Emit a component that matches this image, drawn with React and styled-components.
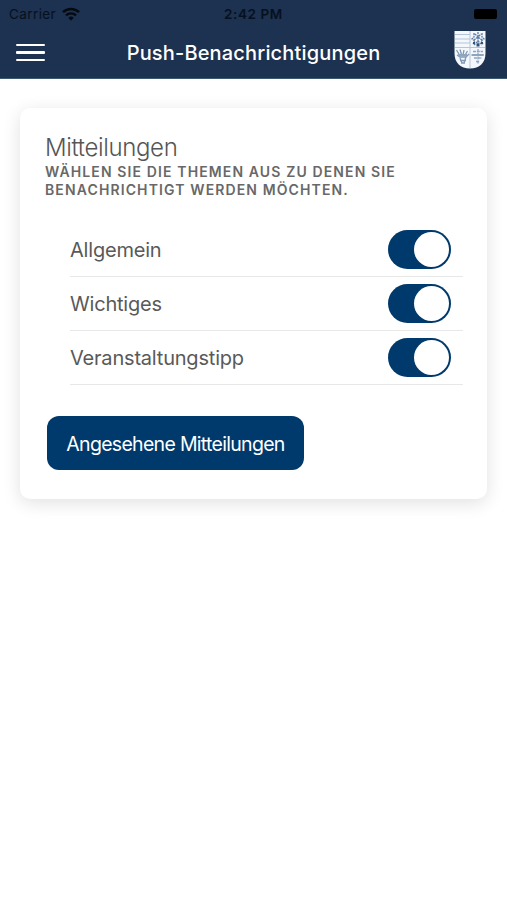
import React, {useState} from "react";
import styled, {createGlobalStyle} from "styled-components";

const topics = ["Allgemein", "Wichtiges", "Veranstaltungstipp"];

const WifiIcon = () => (
	<svg width="18" height="14" viewBox="0 0 18 14" fill="none" stroke="#050a12">
		<path d="M1 5.2a11.4 11.4 0 0 1 16 0" strokeWidth="2.5"/>
		<path d="M4 8.4a7.1 7.1 0 0 1 10 0" strokeWidth="2.3"/>
		<path d="M9 13.6 6.3 10.9a3.9 3.9 0 0 1 5.4 0Z" fill="#050a12" stroke="none"/>
	</svg>
);

const Crest = () => (
	<svg width="32" height="40" viewBox="0 0 32 40">
		<path d="M.5 1h31v22c0 10-6 15.500-15.500 15.500S.5 33 .5 23Z" fill="#f4f8fc"/>
		<g stroke="#b3c5d8" strokeWidth="1" fill="none">
			<path d="M1 4.500h15M1 9h15M1 13h15M1 17.500h30M16 1v37"/>
		</g>
		<g stroke="#5b7ba3" strokeWidth="1.300" fill="none">
			<path d="M24 2v14M20 3v4l-2 2 3 2-2 3M28 3v4l2 2-3 2 2 3M21 4l3 3 3-3M20 10l4-3 4 3M20 15l4-4 4 4" strokeDasharray="2 .7"/>
			<path d="M2.500 20l3 5M6 19.500l1.500 5M10 20l-1 5M13.500 21l-3 5M3 25l3 2h6l3-3M6 28l2 5M12 27l-2 6M6 30.500h6M7 33h4" stroke="#8299b5"/>
			<path d="M24 19v15M19 21.500h10M18 25h12M20 28h8M22 31.500h4" stroke="#8da5bf" strokeDasharray="3 .8"/>
		</g>
		<path d="M22.500 13.500h3v3h-3ZM19 12h2v2h-2ZM27 12h2v2h-2Z" fill="#2d5181"/>
		<path d="M4 24h9v2.500H4ZM17.500 24h12v2h-12Z" fill="#8ea5c0"/>
	</svg>
);

const Toggle = ({label}) => {
	const [on, setOn] = useState(true);
	return (
		<Switch role="switch" aria-label={label} aria-checked={on} $on={on} onClick={() => setOn(!on)}>
			<Knob/>
		</Switch>
	);
};

const App = () => {
	return (
		<Page>
			<GlobalStyle/>
			<Header>
				<StatusBar>
					<Carrier>
						<span>Carrier</span>
						<WifiIcon/>
					</Carrier>
					<Time>2:42 PM</Time>
					<Battery/>
				</StatusBar>
				<Toolbar>
					<MenuButton aria-label="Menü">
						<span/>
						<span/>
						<span/>
					</MenuButton>
					<Title>Push-Benachrichtigungen</Title>
					<Logo>
						<Crest/>
					</Logo>
				</Toolbar>
			</Header>
			<Card>
				<CardTitle>Mitteilungen</CardTitle>
				<CardSubtitle>
					Wählen Sie die Themen aus zu denen Sie benachrichtigt werden möchten.
				</CardSubtitle>
				<List>
					{topics.map((topic) => (
						<Item key={topic}>
							<Label>{topic}</Label>
							<Toggle label={topic}/>
						</Item>
					))}
				</List>
				<Button>Angesehene Mitteilungen</Button>
			</Card>
		</Page>
	);
};

export default App;

const GlobalStyle = createGlobalStyle`
  * {
    box-sizing: border-box;
  }

  body {
    margin: 0;
    background: #ffffff;
    font-family: Inter, "Liberation Sans", sans-serif;
  }

  button {
    border: none;
    padding: 0;
    font-family: inherit;
    cursor: pointer;
  }
`;

const Page = styled.div`
  min-height: 900px;
  overflow: hidden;
`;

const Header = styled.header`
  height: 79px;
  background: #1d3150;
  border-bottom: 1px solid #3c5870;
`;

const StatusBar = styled.div`
  display: grid;
  grid-template-columns: 1fr auto 1fr;
  align-items: center;
  height: 27px;
  padding: 0 10px 0 9px;
  color: #07101e;
  font-size: 13.5px;
`;

const Carrier = styled.div`
  display: flex;
  align-items: center;
  gap: 6px;
  letter-spacing: 0.4px;
`;

const Time = styled.div`
  padding-left: 1px;
  font-weight: 600;
  letter-spacing: 0.6px;
`;

const Battery = styled.div`
  justify-self: end;
  width: 23px;
  height: 10px;
  border-radius: 2px;
  background: #000000;
`;

const Toolbar = styled.div`
  display: grid;
  grid-template-columns: 60px 1fr 60px;
  align-items: center;
  height: 51px;
`;

const MenuButton = styled.button`
  display: flex;
  flex-direction: column;
  gap: 5px;
  width: 29px;
  margin-left: 16px;
  background: transparent;

  span {
    width: 100%;
    height: 2.4px;
    border-radius: 1px;
    background: #ffffff;
  }
`;

const Title = styled.h1`
  margin: 0;
  color: #ffffff;
  font-weight: 500;
  font-size: 20px;
  line-height: 28px;
  letter-spacing: 0.17px;
  text-align: center;
  white-space: nowrap;
`;

const Logo = styled.div`
  display: flex;
  margin-left: 7px;
  margin-top: -6px;
`;

const Card = styled.main`
  margin: 29px 20px 0;
  height: 391px;
  padding: 25px 24px 0 25px;
  border-radius: 10px;
  background: #ffffff;
  box-shadow: 0 4px 18px rgba(0, 0, 0, 0.12);
`;

const CardTitle = styled.h2`
  margin: 0;
  color: #555555;
  font-weight: 300;
  font-size: 24px;
  line-height: 30px;
  letter-spacing: -0.35px;
`;

const CardSubtitle = styled.p`
  margin: 0;
  color: #686868;
  font-weight: 600;
  font-size: 14px;
  line-height: 18.2px;
  letter-spacing: 1.12px;
  text-transform: uppercase;
`;

const List = styled.ul`
  margin: 23.6px 0 0;
  padding: 0 0 0 25px;
  list-style: none;
`;

const Item = styled.li`
  display: flex;
  align-items: center;
  justify-content: space-between;
  height: 54px;
  padding-right: 12px;
  border-bottom: 1px solid #e8e8e8;
`;

const Label = styled.span`
  color: #595959;
  font-size: 20px;
  letter-spacing: -0.2px;
`;

const Switch = styled.button`
  display: flex;
  align-items: center;
  justify-content: ${({$on}) => ($on ? "flex-end" : "flex-start")};
  width: 63px;
  height: 39px;
  padding: 0 2px;
  border-radius: 20px;
  background: ${({$on}) => ($on ? "#003a6c" : "#d5d5d5")};
`;

const Knob = styled.span`
  width: 35px;
  height: 35px;
  border-radius: 50%;
  background: #ffffff;
`;

const Button = styled.button`
  display: block;
  width: 257px;
  height: 54px;
  margin: 31px 0 0 2px;
  padding-top: 1px;
  border-radius: 12px;
  background: #003a6c;
  color: #ffffff;
  font-size: 19.5px;
  letter-spacing: -0.7px;
  white-space: nowrap;
`;
